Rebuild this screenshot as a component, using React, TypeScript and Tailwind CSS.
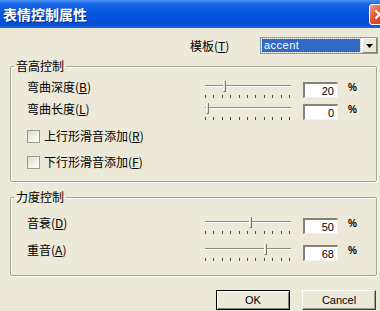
import { ReactNode } from 'react';

const cjk = { fontFamily: '"Noto Sans CJK SC", "Liberation Sans", sans-serif' };
const latin = { fontFamily: '"Liberation Sans", "DejaVu Sans", sans-serif' };

function Label({ text, hot }: { text: string; hot: string }) {
  return (
    <span className="block text-[12px] leading-[14px] text-black whitespace-nowrap" style={cjk}>
      {text}(<span className="underline underline-offset-[1px]">{hot}</span>)
    </span>
  );
}

function Slider({ value }: { value: number }) {
  const ticks = Array.from({ length: 11 });
  return (
    <div className="relative w-[88px] h-[20px] shrink-0">
      <div className="absolute left-[1px] right-[1px] top-[5px] h-[2px] border-t border-[#8f8d80] border-b border-b-white" />
      <div
        className="absolute top-[1px] w-[3px] h-[11px] bg-[#e4e2d4] border-l border-white border-r border-r-[#7a786c] border-b border-b-[#7a786c]"
        style={{ left: 2 + value * 0.86 }}
      />
      <div className="absolute left-[1px] right-[2px] top-[15px] h-[3px] flex justify-between">
        {ticks.map((_, i) => (
          <div key={i} className="w-[1px] h-[3px] bg-[#4a4a4a]" />
        ))}
      </div>
    </div>
  );
}

function NumBox({ value }: { value: string }) {
  return (
    <div
      className="w-[35px] h-[16px] bg-white border-t-2 border-l-2 border-[#858378] border-b border-r border-b-[#f4f3ee] border-r-[#f4f3ee] flex items-center justify-end pr-[3px] text-[11px] leading-[12px] text-black"
      style={latin}
    >
      {value}
    </div>
  );
}

function SliderRow({ text, hot, value }: { text: string; hot: string; value: number }) {
  return (
    <div className="flex h-[22px]">
      <div className="w-[177px] shrink-0">
        <Label text={text} hot={hot} />
      </div>
      <Slider value={value} />
      <div className="ml-[11px] mt-[2px]">
        <NumBox value={String(value)} />
      </div>
      <span className="ml-[10px] mt-[3px] text-[10px] font-bold leading-[10px] text-black" style={latin}>
        %
      </span>
    </div>
  );
}

function CheckRow({ text, hot }: { text: string; hot: string }) {
  return (
    <div className="flex items-center h-[14px]">
      <div className="w-[13px] h-[13px] bg-[linear-gradient(135deg,#dcdad0,#f6f5f0_70%,#fff)] border border-[#9c9a8c]" />
      <div className="ml-[4px]">
        <Label text={text} hot={hot} />
      </div>
    </div>
  );
}

function Group({ title, children }: { title: string; children: ReactNode }) {
  return (
    <fieldset className="ml-[10px] w-[367px] border border-[#a5a394] rounded-[2px] shadow-[inset_1px_1px_0_#fff,1px_1px_0_#fff] p-0 m-0">
      <legend className="ml-[3px] px-[2px] text-[12px] leading-[14px] text-black" style={cjk}>
        {title}
      </legend>
      <div className="pl-[16px]">{children}</div>
    </fieldset>
  );
}

function Button({ children, primary }: { children: ReactNode; primary?: boolean }) {
  return (
    <div
      className={`w-[74px] h-[20px] flex items-center justify-center text-[11px] text-black bg-[#ECE9D8] ${
        primary
          ? 'border border-black shadow-[inset_1px_1px_0_#fff,inset_-1px_-1px_0_#808080]'
          : 'border-t border-l border-white border-b border-r border-b-[#404040] border-r-[#404040] shadow-[inset_-1px_-1px_0_#a09e92]'
      }`}
      style={latin}
    >
      {children}
    </div>
  );
}

export default function App() {
  return (
    <div className="w-[380px] h-[311px] overflow-hidden bg-[#ECE9D8] flex flex-col">
      {/* title bar */}
      <div className="h-[28px] shrink-0 flex items-center justify-between overflow-hidden bg-[linear-gradient(to_bottom,#4a93f7_0px,#1763e6_4px,#0455dc_14px,#0350d6_24px,#1f63d8_28px)]">
        <span
          className="ml-[3px] text-[14px] leading-[16px] font-bold text-white [text-shadow:1px_1px_0_#0a2f8a]"
          style={cjk}
        >
          表情控制属性
        </span>
        <div className="w-[21px] h-[21px] -mr-[10px] shrink-0 rounded-[3px] border border-white bg-[linear-gradient(135deg,#f0a08a,#e0522c_45%,#c8381a)] flex items-center justify-center">
          <svg width="11" height="11" viewBox="0 0 11 11">
            <path d="M1.5 1.5 L9.5 9.5 M9.5 1.5 L1.5 9.5" stroke="white" strokeWidth="2" />
          </svg>
        </div>
      </div>

      {/* template row */}
      <div className="flex items-center h-[17px] mt-[9px] pl-[190px]">
        <span className="w-[70px] text-[12px] leading-[14px] text-black" style={cjk}>
          模板(<span className="underline underline-offset-[1px]">T</span>)
        </span>
        <div className="w-[118px] h-[17px] bg-white border border-[#7f9db9] flex items-center">
          <div className="flex-1 h-[13px] ml-[1px] bg-[#316AC5] outline-1 outline-dotted outline-[#c0c0c0] flex items-center pl-[2px] text-[11px] text-white tracking-[0.5px]" style={latin}>
            accent
          </div>
          <div className="w-[15px] h-[15px] ml-[2px] bg-[#ECE9D8] border-l border-t border-white border-r border-b border-r-[#808080] border-b-[#808080] flex items-center justify-center">
            <svg width="7" height="4" viewBox="0 0 7 4">
              <path d="M0 0 H7 L3.5 4 Z" fill="black" />
            </svg>
          </div>
        </div>
      </div>

      {/* pitch group */}
      <div className="mt-[5px]">
        <Group title="音高控制">
          <div className="mt-[7px]">
            <SliderRow text="弯曲深度" hot="B" value={20} />
            <SliderRow text="弯曲长度" hot="L" value={0} />
          </div>
          <div className="mt-[5px]">
            <CheckRow text="上行形滑音添加" hot="R" />
          </div>
          <div className="mt-[12px] mb-[12px]">
            <CheckRow text="下行形滑音添加" hot="F" />
          </div>
        </Group>
      </div>

      {/* dynamics group */}
      <div className="mt-[8px]">
        <Group title="力度控制">
          <div className="mt-[12px]">
            <SliderRow text="音衰" hot="D" value={50} />
          </div>
          <div className="mt-[5px] mb-[10px]">
            <SliderRow text="重音" hot="A" value={68} />
          </div>
        </Group>
      </div>

      {/* buttons */}
      <div className="flex mt-[14px] pl-[216px] gap-[12px]">
        <Button primary>OK</Button>
        <Button>Cancel</Button>
      </div>
    </div>
  );
}
